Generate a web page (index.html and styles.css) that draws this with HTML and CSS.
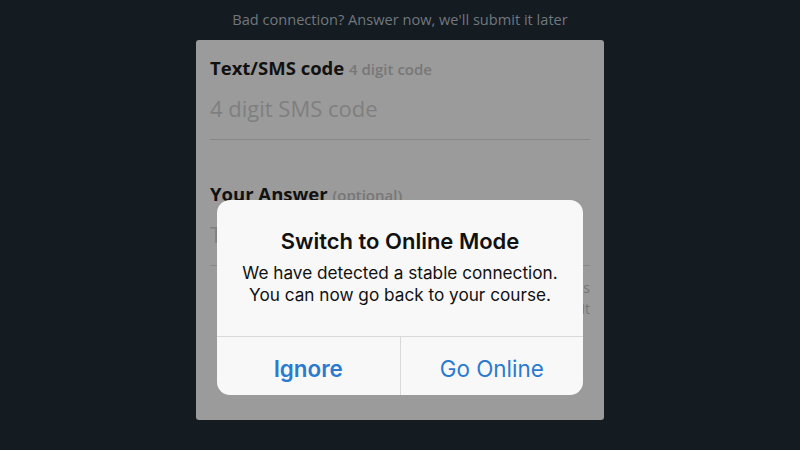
FILE: index.html
```html
<!DOCTYPE html>
<html lang="en">
<head>
  <meta charset="UTF-8">
  <meta name="viewport" content="width=device-width, initial-scale=1.0">
  <title>Offline answer</title>
  <link rel="stylesheet" href="styles.css">
</head>
<body>
  <div class="page">
    <p class="notice">Bad connection? Answer now, we'll submit it later</p>
    <div class="card">
      <div class="field">
        <label class="field-label">Text/SMS code <span class="hint">4 digit code</span></label>
        <div class="field-input">4 digit SMS code</div>
      </div>
      <div class="field">
        <label class="field-label">Your Answer <span class="hint">(optional)</span></label>
        <div class="field-input">Type your answer here</div>
        <p class="field-note">Answers are saved on this device and will be sent as<br>soon as you are back online, so you can close it</p>
      </div>
    </div>
  </div>

  <div class="alert">
    <div class="alert-body">
      <h2 class="alert-title">Switch to Online Mode</h2>
      <p class="alert-text">We have detected a stable connection.<br>You can now go back to your course.</p>
    </div>
    <div class="alert-actions">
      <button class="alert-btn bold">Ignore</button>
      <button class="alert-btn">Go Online</button>
    </div>
  </div>
</body>
</html>
```

FILE: styles.css
```css
body {
  margin: 0;
  background: #141b21;
  font-family: "Open Sans", sans-serif;
  height: 450px;
  overflow: hidden;
}
.page {
  width: 408px;
  margin: 0 auto;
}
.notice {
  margin: 0 -20px;
  padding-top: 9px;
  height: 31px;
  font-size: 14.6px;
  line-height: 20px;
  color: #71777d;
  text-align: center;
  white-space: nowrap;
}
.card {
  background: #9b9b9b;
  border-radius: 3px;
  padding: 14px 14px 0;
  height: 366px;
}
.field {
  margin-bottom: 40px;
}
.field-label {
  display: block;
  font-size: 18.5px;
  font-weight: 700;
  line-height: 28px;
  color: #111;
}
.hint {
  font-size: 15px;
  font-weight: 600;
  color: #777;
}
.field-input {
  font-size: 22px;
  line-height: 30px;
  color: #7f7f7f;
  padding: 10px 0 16px;
  border-bottom: 1px solid #878787;
}
.field-note {
  margin: 11px 0 0;
  font-size: 14px;
  line-height: 21px;
  color: #767676;
  text-align: right;
}
.alert {
  position: absolute;
  left: 217px;
  top: 200px;
  width: 366px;
  background: #f8f8f8;
  border-radius: 13px;
  overflow: hidden;
  font-family: Inter, "Liberation Sans", sans-serif;
  text-align: center;
}
.alert-body {
  padding: 27px 10px 0;
  height: 109px;
  border-bottom: 1px solid #d9d9d9;
}
.alert-title {
  margin: 0;
  font-size: 22px;
  font-weight: 600;
  line-height: 28px;
  color: #111;
}
.alert-text {
  margin: 7px 0 0;
  font-size: 17.2px;
  line-height: 22px;
  color: #111;
}
.alert-actions {
  display: flex;
  height: 58px;
}
.alert-btn {
  flex: 1;
  border: 0;
  background: none;
  font-family: inherit;
  font-size: 22.4px;
  color: #2a7bd0;
  padding: 4px 0 0;
}
.alert-btn + .alert-btn {
  border-left: 1px solid #d9d9d9;
}
.alert-btn.bold {
  font-weight: 600;
}
```
